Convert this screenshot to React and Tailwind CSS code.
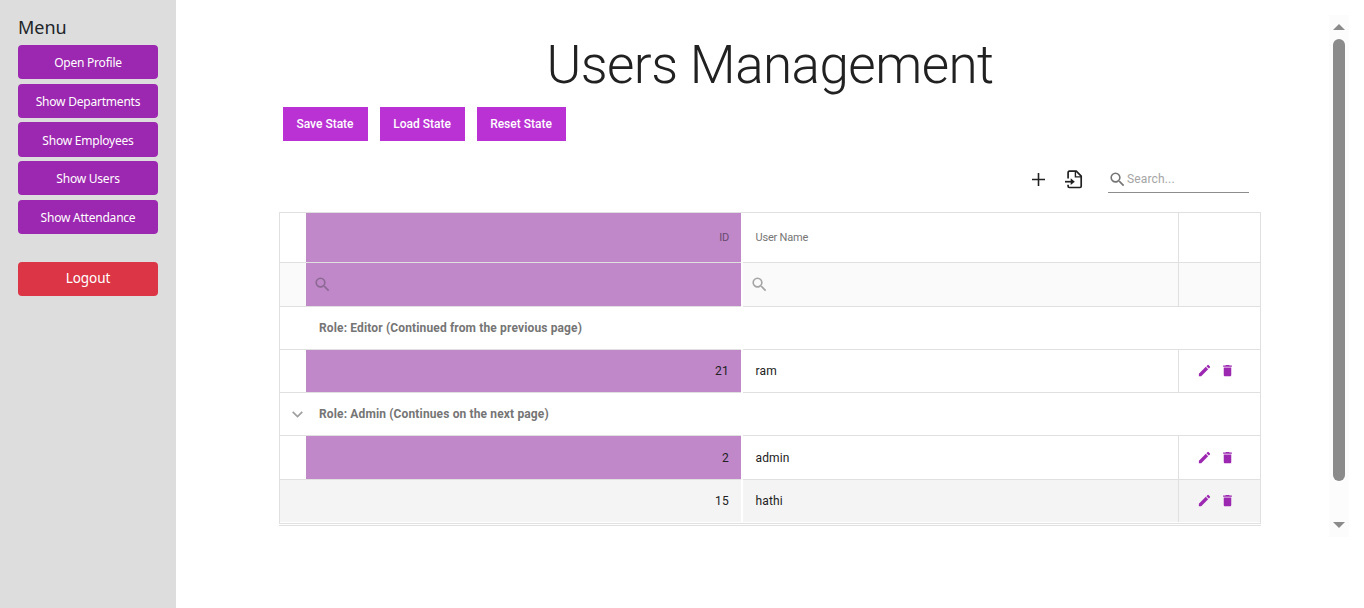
import React from 'react';
import { MdSearch, MdEdit, MdDelete } from 'react-icons/md';

const line = 'border-[#e0e0e0]';

function MenuButton({ children, className = '' }) {
  return (
    <button
      className={`flex w-[140px] items-center justify-center rounded-[4px] bg-[#9c27b0] pt-[2px] font-['Noto_Sans','Open_Sans',sans-serif] text-[12px] leading-none tracking-[-0.22px] text-white ${className}`}
    >
      {children}
    </button>
  );
}

function StateButton({ children, className = '' }) {
  return (
    <button className={`flex h-[34px] items-center justify-center bg-[#ba32d4] pr-[1px] text-[12px] font-medium text-white ${className}`}>
      {children}
    </button>
  );
}

function GroupRow({ children, open = false }) {
  return (
    <div className="flex h-[43px]">
      <div className={`flex w-[461px] items-center border-b ${line}`}>
        <div className="flex w-[39px] justify-center pr-[5px] pt-[1px]">
          {open && (
            <svg width="11" height="7" viewBox="0 0 11 7" fill="none" stroke="#a0a0a0" strokeWidth="1.7">
              <path d="M0.7 0.8L5.5 5.6L10.3 0.8" />
            </svg>
          )}
        </div>
        <span className="whitespace-nowrap text-[12px] font-bold tracking-[0.14px] text-[#757575]">{children}</span>
      </div>
      <div className={`ml-[2px] flex-1 border-b ${line}`} />
    </div>
  );
}

function DataRow({ id, name, height, alt = false }) {
  return (
    <div className={`flex text-[12px] text-[#212121] ${height}`}>
      <div className={`w-[26px] ${alt ? 'bg-[#f4f4f4]' : `border-b ${line}`}`} />
      <div className={`flex w-[435px] items-center justify-end pr-[12px] tracking-[0.3px] ${alt ? 'bg-[#f4f4f4]' : `border-b bg-[#c088c9] ${line}`}`}>
        {id}
      </div>
      <div className={`ml-[2px] flex w-[435px] items-center pl-[12.5px] tracking-[0.15px] ${alt ? 'bg-[#f4f4f4]' : `border-b ${line}`}`}>
        {name}
      </div>
      <div className={`flex flex-1 items-center gap-[8px] border-l pl-[18px] text-[#9c27b0] ${line} ${alt ? 'bg-[#f4f4f4] pb-px' : 'border-b pb-px'}`}>
        <MdEdit size={15} />
        <MdDelete size={15} />
      </div>
    </div>
  );
}

export default function App() {
  return (
    <div className="flex h-[608px] w-[1364px] overflow-hidden bg-white font-['Roboto',sans-serif]">
      <aside className="flex w-[176px] flex-col bg-[#dddddd] pl-[18px] pt-[16px]">
        <h2 className="h-[29px] font-['Noto_Sans','Open_Sans',sans-serif] text-[18px] leading-[23px] text-[#212529]">Menu</h2>
        <MenuButton className="h-[34px]">Open Profile</MenuButton>
        <MenuButton className="mt-[5px] h-[34px]">Show Departments</MenuButton>
        <MenuButton className="mt-[4px] h-[35px]">Show Employees</MenuButton>
        <MenuButton className="mt-[4px] h-[34px]">Show Users</MenuButton>
        <MenuButton className="mt-[5px] h-[34px]">Show Attendance</MenuButton>
        <button className="mt-[28px] flex h-[34px] w-[140px] items-center justify-center rounded-[4px] bg-[#dc3545] font-['Noto_Sans','Open_Sans',sans-serif] text-[13.5px] leading-none tracking-[-0.1px] text-white">
          Logout
        </button>
      </aside>

      <main className="ml-[103px] w-[982px] pt-[35px]">
        <h1 className="h-[72px] whitespace-nowrap text-center text-[53px] font-light leading-[60px] tracking-[-0.55px] text-[#212121]">Users Management</h1>
        <div className="flex gap-[12px] pl-[4px]">
          <StateButton className="w-[85px]">Save State</StateButton>
          <StateButton className="w-[85px]">Load State</StateButton>
          <StateButton className="w-[89px]">Reset State</StateButton>
        </div>

        <div className="flex h-[71px] items-start justify-end pr-[12px] pt-[25px]">
          <svg className="mr-[20px] mt-[7px]" width="13" height="13" viewBox="0 0 13 13" stroke="#212121" strokeWidth="1.6">
            <path d="M6.5 0V13M0 6.5H13" />
          </svg>
          <svg className="mr-[25px] mt-[4px]" width="18" height="19" viewBox="0 0 18 19" fill="none" stroke="#212121" strokeWidth="1.7">
            <path d="M3.1 8.5V2.4Q3.1 1.2 4.3 1.2H11.3L16.2 6.1V16.3Q16.2 17.5 15 17.5H4.3Q3.1 17.5 3.1 16.3V14.7" />
            <path d="M10.4 1.4V6.9H16" strokeWidth="1.4" />
            <path d="M0 11.7H8" />
            <path d="M5.7 8.3L9.8 11.7L5.7 15.1Z" fill="#212121" stroke="none" />
          </svg>
          <div className="flex h-[27px] w-[141px] items-center border-b border-[#8d8d8d] text-[12px] text-[#a5a5a5]">
            <MdSearch size={19} color="#757575" />
            <span className="tracking-[0.15px]">Search...</span>
          </div>
        </div>

        <section className={`h-[311px] border-x border-t ${line}`}>
          <div className="flex h-[50px] text-[11px] tracking-[-0.2px] text-[#757575]">
            <div className={`w-[26px] border-b ${line}`} />
            <div className={`flex w-[435px] items-center justify-end border-b bg-[#c088c9] pr-[12px] pt-px text-[#67486e] ${line}`}>ID</div>
            <div className={`ml-[2px] flex w-[435px] items-center border-b pl-[12.5px] pt-px ${line}`}>User Name</div>
            <div className={`flex-1 border-b border-l ${line}`} />
          </div>
          <div className="flex h-[44px]">
            <div className={`w-[26px] border-b bg-[#fafafa] ${line}`} />
            <div className={`flex w-[435px] items-center border-b bg-[#c088c9] pl-[6.5px] text-[#8c6a94] ${line}`}>
              <MdSearch size={19} />
            </div>
            <div className={`ml-[2px] flex w-[435px] items-center border-b bg-[#fafafa] pl-[6.5px] text-[#a5a5a5] ${line}`}>
              <MdSearch size={19} />
            </div>
            <div className={`flex-1 border-b border-l bg-[#fafafa] ${line}`} />
          </div>
          <GroupRow>Role: Editor (Continued from the previous page)</GroupRow>
          <DataRow id="21" name="ram" height="h-[43px]" />
          <GroupRow open>Role: Admin (Continues on the next page)</GroupRow>
          <DataRow id="2" name="admin" height="h-[44px]" />
          <DataRow id="15" name="hathi" height="h-[42px]" alt />
        </section>
        <div className={`h-[3px] border-y ${line}`} />
      </main>

      <div className="ml-[68px] mt-[15px] flex h-[522px] w-[20px] flex-col items-center bg-[#fcfcfc] pt-[9px]">
        <svg width="12" height="6" viewBox="0 0 12 6" fill="#8b8b8b">
          <path d="M6 0L12 6H0Z" />
        </svg>
        <div className="mt-[9px] h-[442px] w-[12px] rounded-full bg-[#8b8b8b]" />
        <svg className="mt-[41px]" width="12" height="6" viewBox="0 0 12 6" fill="#8b8b8b">
          <path d="M0 0H12L6 6Z" />
        </svg>
      </div>
    </div>
  );
}
